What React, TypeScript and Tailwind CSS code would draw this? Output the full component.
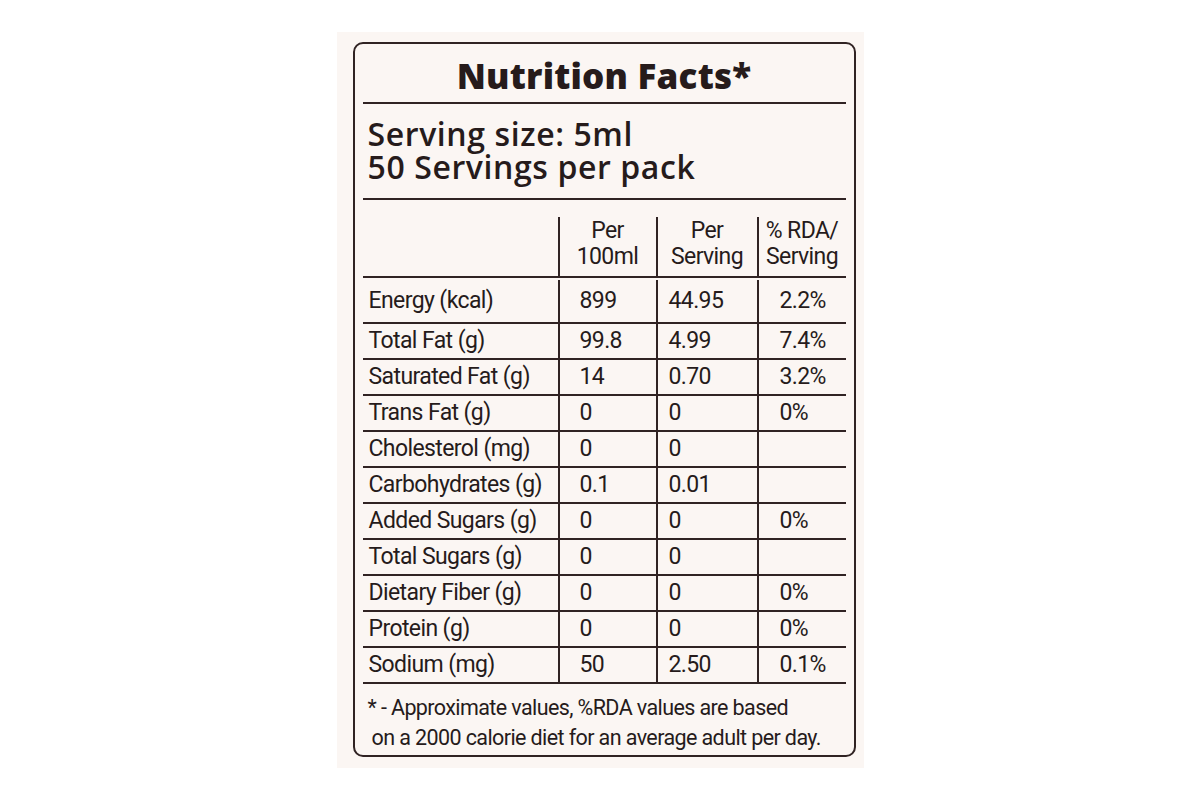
const rows = [
  { label: "Energy (kcal)", a: "899", b: "44.95", c: "2.2%" },
  { label: "Total Fat (g)", a: "99.8", b: "4.99", c: "7.4%" },
  { label: "Saturated Fat (g)", a: "14", b: "0.70", c: "3.2%" },
  { label: "Trans Fat (g)", a: "0", b: "0", c: "0%" },
  { label: "Cholesterol (mg)", a: "0", b: "0", c: "" },
  { label: "Carbohydrates (g)", a: "0.1", b: "0.01", c: "" },
  { label: "Added Sugars (g)", a: "0", b: "0", c: "0%" },
  { label: "Total Sugars (g)", a: "0", b: "0", c: "" },
  { label: "Dietary Fiber (g)", a: "0", b: "0", c: "0%" },
  { label: "Protein (g)", a: "0", b: "0", c: "0%" },
  { label: "Sodium (mg)", a: "50", b: "2.50", c: "0.1%" },
];

export default function App() {
  return (
    <div className="w-[1200px] h-[800px] bg-white flex justify-center pt-[32px] font-['Open_Sans',sans-serif] text-[#261b1b]">
      {/* label card */}
      <div className="w-[527px] h-[736px] bg-[#fbf6f3] pl-[16px] pr-[8px] pt-[10px] pb-[11px]">
        <div className="h-full border-2 border-[#302323] rounded-[10px] px-[8px] flex flex-col">
          {/* Title */}
          <div className="h-[58px] flex items-center justify-center">
            <h1 className="text-[35px] leading-none font-extrabold tracking-[0.2px] pt-[4px]">Nutrition Facts*</h1>
          </div>
          <div className="h-[2px] bg-[#302323]" />

          {/* Serving */}
          <div className="h-[94px] pl-[5px] pt-[13px] text-[32px] leading-[33px] font-semibold tracking-[0.6px]">
            <p>Serving size: 5ml</p>
            <p>50 Servings per pack</p>
          </div>
          <div className="h-[2px] bg-[#302323]" />

          {/* Table */}
          <div className="font-['Roboto',sans-serif] text-[23px] tracking-[-0.6px]">
            <div className="h-[17px]" />
            <div className="grid grid-cols-[195px_98px_101px_1fr] h-[61px] leading-[26px] text-center border-b-2 border-[#302323]">
              <div />
              <div className="border-l-2 border-[#302323] pt-[1px]">
                <p>Per</p>
                <p>100ml</p>
              </div>
              <div className="border-l-2 border-[#302323] pt-[1px]">
                <p>Per</p>
                <p>Serving</p>
              </div>
              <div className="border-l-2 border-[#302323] pt-[1px]">
                <p>% RDA/</p>
                <p>Serving</p>
              </div>
            </div>

            {rows.map((r, i) => (
              <div
                key={r.label}
                className={`grid grid-cols-[195px_98px_101px_1fr] border-b-2 border-[#302323] ${
                  i === 0 ? "h-[46px] pt-[2px]" : "h-[36px]"
                }`}
              >
                <div className="pl-[6px] flex items-center">{r.label}</div>
                <div className="border-l-2 border-[#302323] pl-[20px] flex items-center">{r.a}</div>
                <div className="border-l-2 border-[#302323] pl-[11px] flex items-center">{r.b}</div>
                <div className="border-l-2 border-[#302323] pl-[21px] flex items-center">{r.c}</div>
              </div>
            ))}

            {/* Footnote */}
            <div className="pl-[5px] pt-[9px] text-[21.5px] leading-[30px]">
              <p>* - Approximate values, %RDA values are based</p>
              <p className="pl-[4px]">on a 2000 calorie diet for an average adult per day.</p>
            </div>
          </div>
        </div>
      </div>
    </div>
  );
}
